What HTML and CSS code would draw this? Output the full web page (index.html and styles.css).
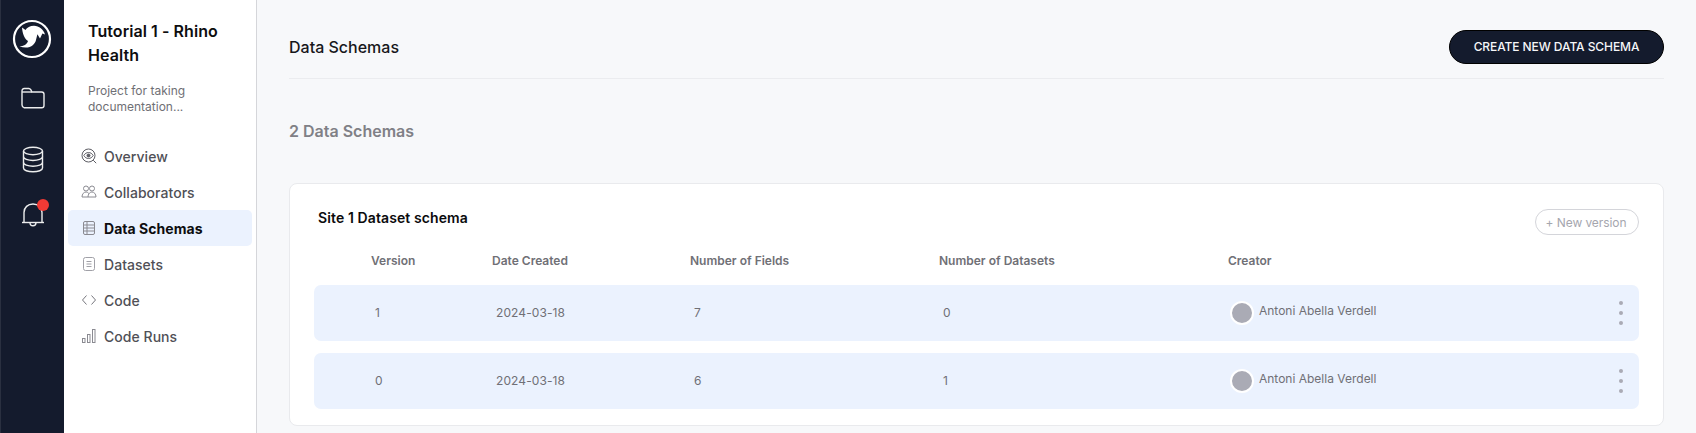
FILE: index.html
```html
<!DOCTYPE html>
<html lang="en">
<head>
<meta charset="utf-8">
<title>Data Schemas</title>
<link rel="stylesheet" href="styles.css">
</head>
<body>
<div class="app">
  <nav class="rail">
    <svg class="logo" viewBox="0 0 40 40" width="40" height="40">
      <circle cx="20" cy="20" r="18" fill="none" stroke="#fff" stroke-width="2.200"/>
      <path d="M10 8.500l3.500 2.500C15 8.500 18 6.800 22 6.800c5 0 9.500 3.500 11 8.700l-2.600-1-2.400 5-2.600-4.200-1.400 5.700c-1.200 5-6.500 9.800-16.500 6.500 4-.4 7.500-2 8.500-5.500-3.800-2.500-5.500-7.500-6-13.500z" fill="#fff"/>
    </svg>
    <svg class="rail-icon folder" viewBox="0 0 24 22" width="24" height="22" fill="none" stroke="#eceded" stroke-width="1.400">
      <path d="M1 4c0-1.500.8-2.500 2.300-2.500h4.500c1 0 1.500.5 2.200 1.500l1 2h9.700c1.500 0 2.300.8 2.300 2.300v11.200c0 1.500-.8 2.300-2.300 2.300H3.300C1.800 20.300 1 19.500 1 18z"/>
      <path d="M1 5h10"/>
    </svg>
    <svg class="rail-icon db" viewBox="0 0 22 27" width="22" height="27" fill="none" stroke="#eceded" stroke-width="1.400">
      <ellipse cx="11" cy="5" rx="9.500" ry="3.800"/>
      <path d="M1.500 5v17c0 2.200 4.300 3.800 9.500 3.800s9.500-1.600 9.500-3.800V5"/>
      <path d="M1.500 10.700c0 2.200 4.300 3.800 9.500 3.800s9.500-1.600 9.500-3.800"/>
      <path d="M1.500 16.400c0 2.200 4.300 3.800 9.500 3.800s9.500-1.600 9.500-3.800"/>
    </svg>
    <div class="bell">
      <svg viewBox="0 0 24 26" width="24" height="26" fill="none" stroke="#eceded" stroke-width="1.400">
        <path d="M3 20V10.500C3 5.500 6.800 2 12 2s9 3.500 9 8.500V20"/>
        <path d="M1 20.500h22"/>
        <path d="M9 20.500c0 2 1.300 3.300 3 3.300s3-1.300 3-3.300"/>
      </svg>
      <span class="badge"></span>
    </div>
  </nav>

  <aside class="sidebar">
    <h1 class="project-title">Tutorial 1 - Rhino Health</h1>
    <p class="project-desc">Project for taking documentation...</p>
    <ul class="menu">
      <li class="menu-item">
        <svg class="menu-icon" viewBox="0 0 16 16" fill="none" stroke="#5c5c63" stroke-width="1">
          <circle cx="7.500" cy="7.500" r="6.500"/><path d="M2.800 7.500c1.200-2 2.800-3 4.700-3s3.500 1 4.700 3c-1.200 2-2.800 3-4.700 3s-3.500-1-4.700-3z"/><circle cx="7.500" cy="7.500" r="1.500" fill="#5c5c63"/><path d="M12.200 12.200l3 3"/>
        </svg>
        <span>Overview</span>
      </li>
      <li class="menu-item">
        <svg class="menu-icon" viewBox="0 0 16 16" fill="none" stroke="#8a8a91" stroke-width="1">
          <circle cx="5" cy="4.500" r="2.500"/><circle cx="11" cy="4.500" r="2.500"/><path d="M1 13c0-3 1.800-5 4-5 1.300 0 2.300.6 3 1.600.7-1 1.700-1.600 3-1.600 2.200 0 4 2 4 5z"/><path d="M8 9.600c-.6.900-1 2.100-1 3.400"/>
        </svg>
        <span>Collaborators</span>
      </li>
      <li class="menu-item active">
        <svg class="menu-icon" viewBox="0 0 16 16" fill="none" stroke="#8a8a91" stroke-width="1">
          <rect x="2.500" y="1.500" width="11" height="13" rx="1.500"/><path d="M2.500 5h11M2.500 8h11M2.500 11h11M6 1.500v13"/>
        </svg>
        <span>Data Schemas</span>
      </li>
      <li class="menu-item">
        <svg class="menu-icon" viewBox="0 0 16 16" fill="none" stroke="#a0a0a7" stroke-width="1">
          <rect x="2.500" y="1.500" width="11" height="13" rx="2"/><path d="M5.500 5.500h5M5.500 8h5M5.500 10.500h5"/>
        </svg>
        <span>Datasets</span>
      </li>
      <li class="menu-item">
        <svg class="menu-icon" viewBox="0 0 16 16" fill="none" stroke="#77777e" stroke-width="1">
          <path d="M5.500 3.500L1.500 8l4 4.500M10.500 3.500l4 4.500-4 4.500"/>
        </svg>
        <span>Code</span>
      </li>
      <li class="menu-item">
        <svg class="menu-icon" viewBox="0 0 16 16" fill="none" stroke="#8a8a91" stroke-width="1">
          <rect x="1.500" y="10.500" width="2.500" height="4"/><rect x="6.500" y="6.500" width="2.500" height="8"/><rect x="11.500" y="1.500" width="2.500" height="13"/>
        </svg>
        <span>Code Runs</span>
      </li>
    </ul>
  </aside>

  <main class="main">
    <header class="page-header">
      <h2 class="page-title">Data Schemas</h2>
      <button class="primary-btn">CREATE NEW DATA SCHEMA</button>
    </header>
    <h3 class="count">2 Data Schemas</h3>
    <section class="card">
      <div class="card-head">
        <h4 class="card-title">Site 1 Dataset schema</h4>
        <button class="ghost-btn">+ New version</button>
      </div>
      <div class="table-row table-head">
        <span class="col-version">Version</span>
        <span class="col-date">Date Created</span>
        <span class="col-fields">Number of Fields</span>
        <span class="col-datasets">Number of Datasets</span>
        <span class="col-creator">Creator</span>
      </div>
      <div class="table-row data-row">
        <span class="col-version val">1</span>
        <span class="col-date val">2024-03-18</span>
        <span class="col-fields val">7</span>
        <span class="col-datasets val">0</span>
        <span class="col-creator creator"><i class="avatar"></i><span class="name">Antoni Abella Verdell</span></span>
        <span class="dots"><i></i><i></i><i></i></span>
      </div>
      <div class="table-row data-row">
        <span class="col-version val">0</span>
        <span class="col-date val">2024-03-18</span>
        <span class="col-fields val">6</span>
        <span class="col-datasets val">1</span>
        <span class="col-creator creator"><i class="avatar"></i><span class="name">Antoni Abella Verdell</span></span>
        <span class="dots"><i></i><i></i><i></i></span>
      </div>
    </section>
  </main>
</div>
</body>
</html>
```
FILE: styles.css
```css
* { box-sizing: border-box; }
html, body { margin: 0; height: 100%; overflow: hidden; }
body {
  font-family: Inter, "Liberation Sans", sans-serif; background: #f7f8fa; color: #111;
}
h1, h2, h3, h4, p, ul { margin: 0; padding: 0; }
ul { list-style: none; }

.app { display: flex; height: 433px; }

.rail {
  width: 64px; flex: none; background: #141b2d;
  border-left: 1px solid #2a3040;
  display: flex; flex-direction: column; align-items: center;
}
.logo { margin-top: 19px; margin-left: -1px; }
.rail-icon { display: block; }
.folder { margin-top: 28px; }
.db { margin-top: 37px; }
.bell { position: relative; width: 24px; height: 26px; margin-top: 29px; }
.bell svg { display: block; }
.badge {
  position: absolute; top: -3px; right: -4px; width: 12px; height: 12px;
  border-radius: 50%; background: #f03a35;
}

.sidebar {
  width: 193px; flex: none; background: #fff;
  border-right: 1px solid #d5d6da;
  padding: 19px 4px 0;
}
.project-title {
  font-size: 16px; line-height: 24px; font-weight: 600; color: #0d0d0f;
  padding: 0 20px; width: 186px; letter-spacing: .06px;
}
.project-desc {
  font-size: 12px; line-height: 16px; color: #6f6f75;
  padding: 0 20px; margin-top: 16px; width: 180px;
}
.menu { margin-top: 23px; }
.menu-item {
  display: flex; align-items: center; height: 36px; padding-left: 13px;
  font-size: 14px; font-weight: 500; color: #505056; border-radius: 5px;
  letter-spacing: .04px;
}
.menu-item.active { background: #ebf2fe; color: #0d0d0f; font-weight: 700; }
.menu-icon { width: 16px; height: 16px; margin-right: 7px; flex: none; }

.main { flex: 1; min-width: 0; padding: 0 32px; }
.page-header {
  display: flex; justify-content: space-between; align-items: center;
  height: 79px; padding: 30px 0 15px;
  border-bottom: 1px solid #ebecef;
}
.page-title { font-size: 16px; font-weight: 500; color: #17171b; }
.primary-btn {
  height: 34px; width: 215px; border: 1px solid #000; border-radius: 17px;
  background: #141b2d; color: #f6f6f8; font: 500 12px Inter, sans-serif; padding: 0;
  letter-spacing: -.08px;
}
.count { font-size: 16px; line-height: 24px; font-weight: 600; color: #808086; margin-top: 40px; }
.card {
  margin-top: 40px; height: 243px; background: #fff;
  border: 1px solid #e9eaed; border-radius: 8px; padding: 0 24px;
}
.card-head { display: flex; justify-content: space-between; height: 55px; }
.card-title {
  font-size: 14px; line-height: 20px; font-weight: 600; color: #0b0b0d; margin: 24px 0 0 4px;
  letter-spacing: .1px;
}
.ghost-btn {
  height: 26px; width: 104px; margin-top: 25px; border: 1px solid #d4d5da; border-radius: 13px;
  background: #fff; color: #a5a6ae; font: 400 12px Inter, sans-serif; padding: 0 2px 0 0;
  letter-spacing: -.08px;
}
.table-row {
  display: grid; grid-template-columns: 178px 198px 249px 289px 1fr; align-items: center;
}
.table-head {
  height: 42px; margin-bottom: 4px; font-size: 12px; font-weight: 600; color: #707076;
}
.table-head .col-version { margin-left: 57px; }
.data-row {
  position: relative; height: 56px; margin-bottom: 12px; padding-bottom: 1px;
  background: #ebf2fe; border-radius: 7px;
  font-size: 12px; color: #707076;
}
.data-row .col-version { margin-left: 57px; }
.data-row .col-date { letter-spacing: .1px; }
.val { padding-left: 4px; }
.creator { display: flex; align-items: center; }
.avatar {
  width: 24px; height: 24px; border-radius: 50%; background: #aaabb5;
  border: 2px solid #fff; flex: none; margin-left: 2px;
}
.name { margin-left: 5px; position: relative; top: -2px; }
.dots {
  position: absolute; right: 16px; top: 16px;
  display: flex; flex-direction: column; gap: 6px;
}
.dots i { width: 4px; height: 4px; border-radius: 50%; background: #aaabb5; display: block; }
```
